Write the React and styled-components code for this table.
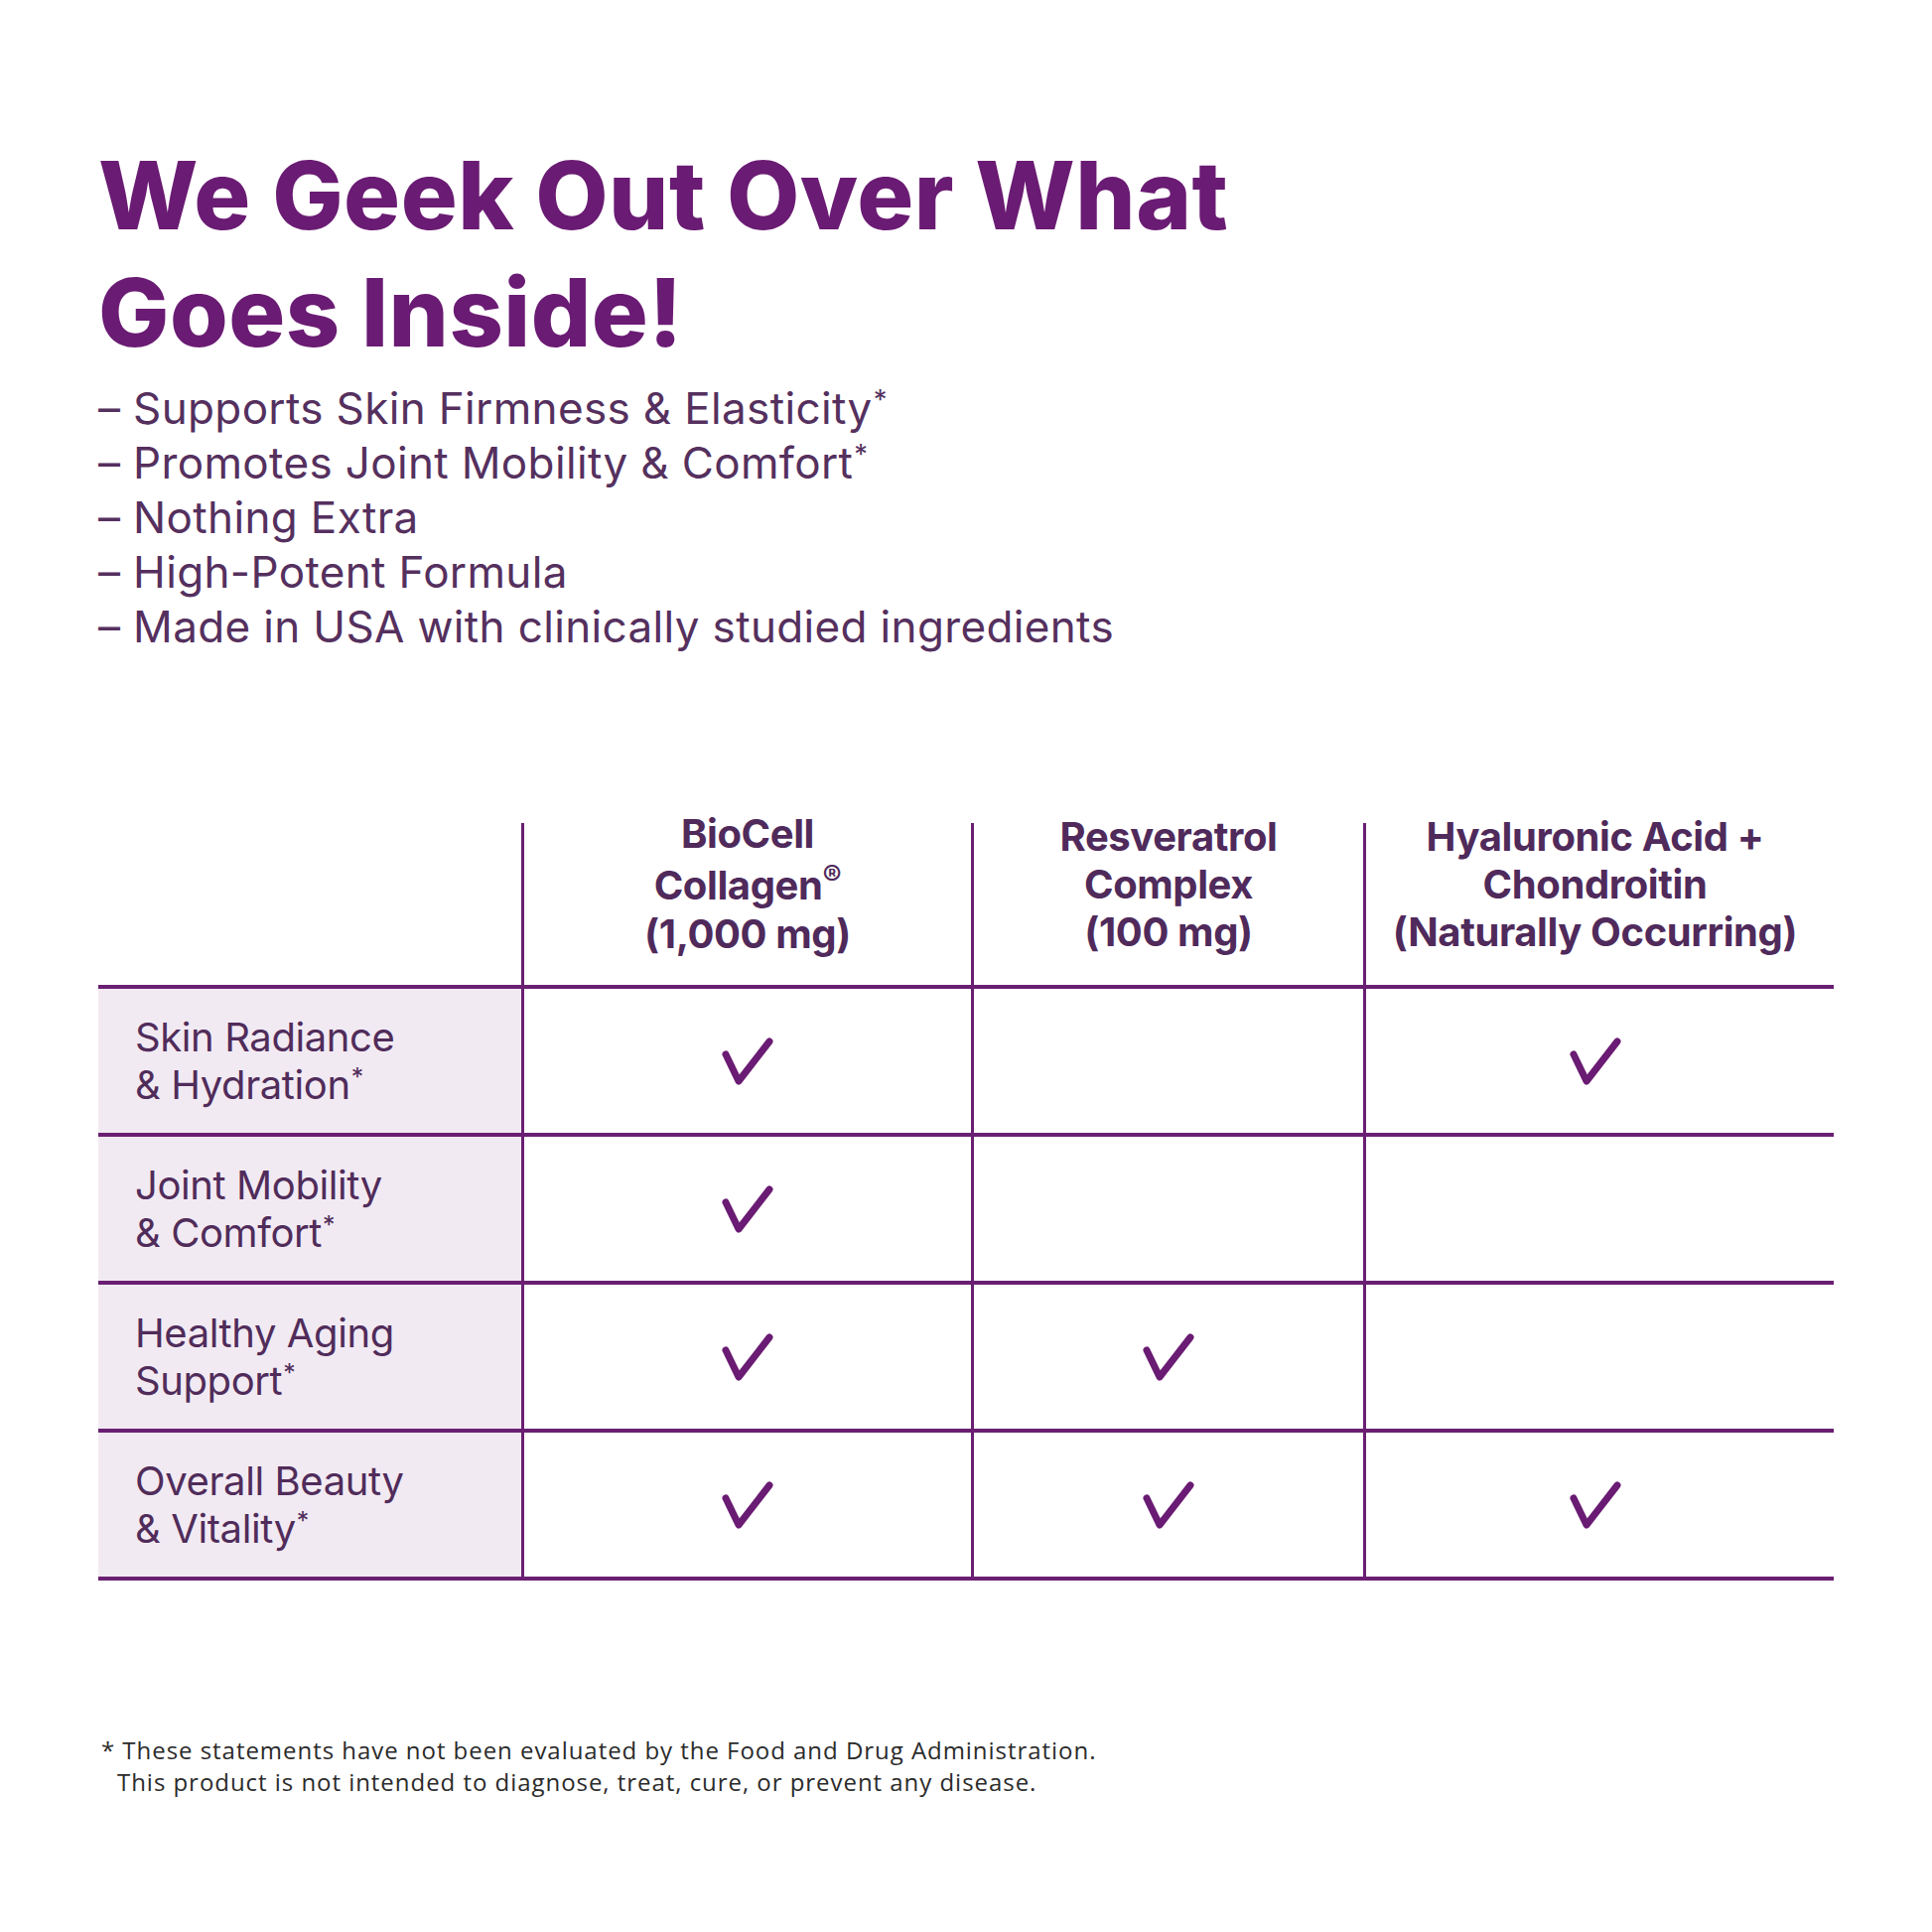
import React from "react";
import styled, { createGlobalStyle } from "styled-components";

const GlobalStyle = createGlobalStyle`
  html, body {
    margin: 0;
    padding: 0;
    background: #ffffff;
  }
  body {
    font-family: Inter, "Noto Sans", sans-serif;
  }
`;

const Page = styled.div`
  width: 1946px;
  height: 1946px;
  box-sizing: border-box;
  padding: 138px 99px 0 99px;
  background: #ffffff;
`;

const Title = styled.h1`
  margin: 0;
  font-family: Inter, sans-serif;
  font-weight: 800;
  font-size: 95px;
  line-height: 118px;
  letter-spacing: 0.005em;
  color: #6a1b73;
`;

const Bullets = styled.ul`
  list-style: none;
  margin: 10px 0 0 0;
  padding: 0;
`;

const Bullet = styled.li`
  font-family: Inter, sans-serif;
  font-weight: 400;
  font-size: 44px;
  line-height: 55px;
  letter-spacing: 0.008em;
  color: #55305e;
`;

const Star = styled.span`
  font-size: 0.62em;
  line-height: 0;
  vertical-align: 0.55em;
  margin-left: 1px;
`;

const Table = styled.div`
  display: grid;
  grid-template-columns: 426px 453px 395px 474px;
  margin-top: 170px;
`;

const HeadCell = styled.div`
  height: 167px;
  box-sizing: border-box;
  border-bottom: 4px solid #6a1f72;
  border-left: ${(p) => (p.$first ? "none" : "3px solid #6a1f72")};
  display: flex;
  align-items: center;
  justify-content: center;
  padding-bottom: 40px;
  padding-right: ${(p) => (p.$last ? "10px" : "0")};
  text-align: center;
  font-family: Inter, sans-serif;
  font-weight: 700;
  font-size: 40px;
  line-height: 48px;
  letter-spacing: -0.01em;
  color: #4f2a5b;
`;

const Reg = styled.sup`
  font-size: 0.72em;
  line-height: normal;
  vertical-align: 0.5em;
  font-weight: 600;
`;

const LabelCell = styled.div`
  height: 149px;
  box-sizing: border-box;
  border-bottom: 4px solid #6a1f72;
  background: #f2eaf3;
  display: flex;
  align-items: center;
  padding-left: 37px;
  font-family: Inter, sans-serif;
  font-weight: 400;
  font-size: 40px;
  line-height: 48px;
  letter-spacing: -0.01em;
  color: #502c5a;
`;

const MarkCell = styled.div`
  height: 149px;
  box-sizing: border-box;
  border-bottom: 4px solid #6a1f72;
  border-left: 3px solid #6a1f72;
  display: flex;
  align-items: center;
  justify-content: center;
  padding-right: ${(p) => (p.$last ? "10px" : "0")};
`;

const Footnote = styled.div`
  margin-top: 155px;
  font-family: "Open Sans", sans-serif;
  font-weight: 400;
  font-size: 24px;
  line-height: 32px;
  letter-spacing: 0.04em;
  color: #2b2b2b;
  padding-left: 3px;
`;

const FootLine = styled.div`
  padding-left: ${(p) => (p.$indent ? "16px" : "0")};
`;

const Check = () => (
  <svg width="52" height="48" viewBox="0 0 52 48" fill="none">
    <path
      d="M4 17 L17 44 L48 4"
      stroke="#6a1b73"
      strokeWidth="7"
      strokeLinecap="round"
      strokeLinejoin="round"
    />
  </svg>
);

const columns = [
  <>
    BioCell
    <br />
    Collagen<Reg>®</Reg>
    <br />
    (1,000 mg)
  </>,
  <>
    Resveratrol
    <br />
    Complex
    <br />
    (100 mg)
  </>,
  <>
    Hyaluronic Acid +
    <br />
    Chondroitin
    <br />
    (Naturally Occurring)
  </>,
];

const rows = [
  { a: "Skin Radiance", b: "& Hydration", marks: [true, false, true] },
  { a: "Joint Mobility", b: "& Comfort", marks: [true, false, false] },
  { a: "Healthy Aging", b: "Support", marks: [true, true, false] },
  { a: "Overall Beauty", b: "& Vitality", marks: [true, true, true] },
];

const bullets = [
  { text: "Supports Skin Firmness & Elasticity", star: true },
  { text: "Promotes Joint Mobility & Comfort", star: true },
  { text: "Nothing Extra" },
  { text: "High-Potent Formula" },
  { text: "Made in USA with clinically studied ingredients" },
];

export default function App() {
  return (
    <>
      <GlobalStyle />
      <Page>
        <Title>
          We Geek Out Over What
          <br />
          Goes Inside!
        </Title>
        <Bullets>
          {bullets.map((b, i) => (
            <Bullet key={i}>
              – {b.text}
              {b.star && <Star>*</Star>}
            </Bullet>
          ))}
        </Bullets>

        <Table>
          <HeadCell $first />
          {columns.map((c, i) => (
            <HeadCell key={i} $last={i === columns.length - 1}>
              <div>{c}</div>
            </HeadCell>
          ))}
          {rows.map((r, i) => (
            <React.Fragment key={i}>
              <LabelCell>
                <div>
                  {r.a}
                  <br />
                  {r.b}
                  <Star>*</Star>
                </div>
              </LabelCell>
              {r.marks.map((m, j) => (
                <MarkCell key={j} $last={j === r.marks.length - 1}>
                  {m && <Check />}
                </MarkCell>
              ))}
            </React.Fragment>
          ))}
        </Table>

        <Footnote>
          <FootLine>* These statements have not been evaluated by the Food and Drug Administration.</FootLine>
          <FootLine $indent>This product is not intended to diagnose, treat, cure, or prevent any disease.</FootLine>
        </Footnote>
      </Page>
    </>
  );
}
